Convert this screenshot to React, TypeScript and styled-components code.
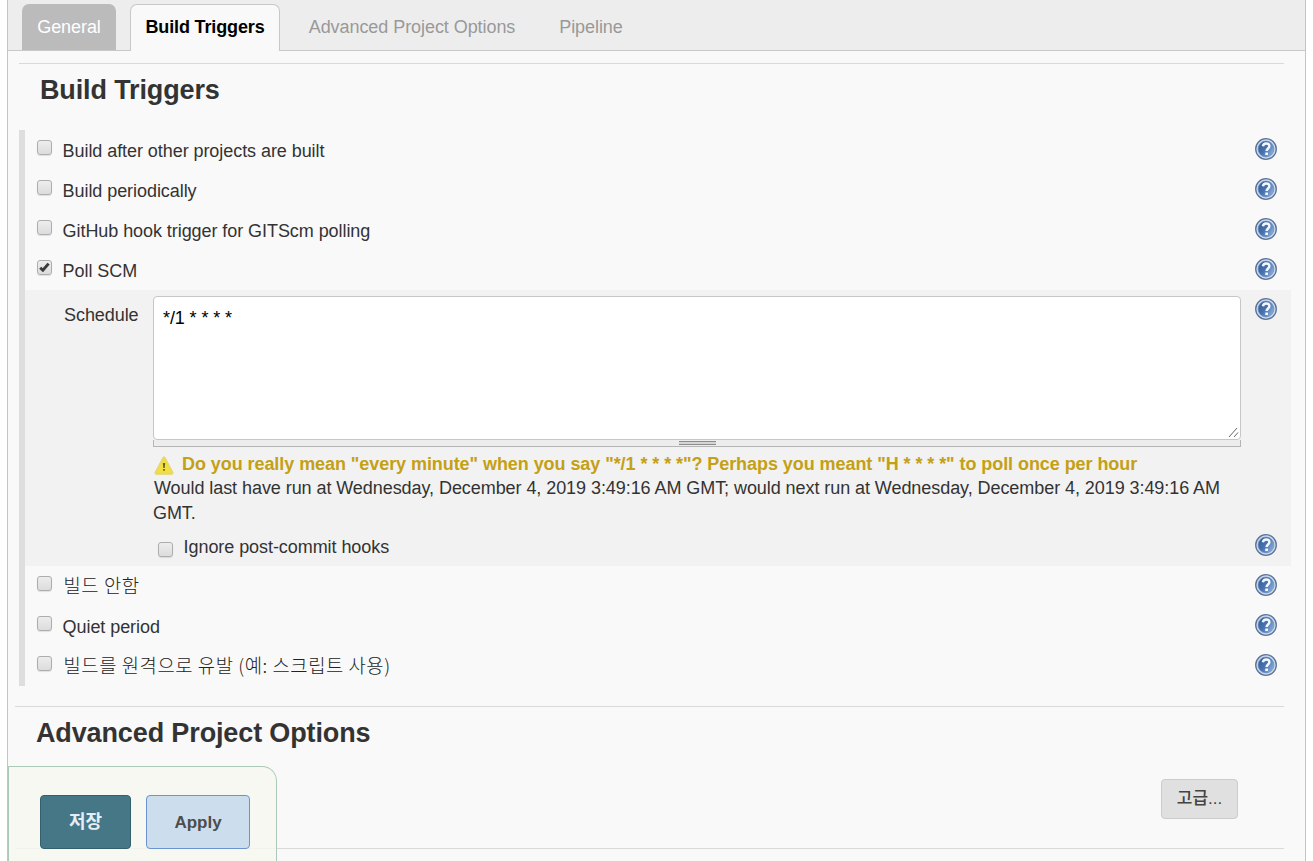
import React from "react";
import styled, { createGlobalStyle } from "styled-components";

const GlobalStyle = createGlobalStyle`
  * { box-sizing: border-box; }
  body {
    margin: 0;
    background: #fff;
    color: #333;
    font-family: "Liberation Sans", "Noto Sans CJK KR", sans-serif;
    font-size: 18px;
    letter-spacing: -0.065px;
    overflow: hidden;
  }
`;

const Page = styled.div`
  height: 861px;
  padding: 0 7px;
  overflow: hidden;
`;

const Panel = styled.main`
  display: flex;
  flex-direction: column;
  width: 1299px;
  height: 861px;
  background: #f9f9f9;
  border: solid #c4c4c4;
  border-width: 0 1px;
`;

const TabBar = styled.nav`
  display: flex;
  align-items: flex-end;
  height: 51px;
  padding-left: 14px;
  background: #ededed;
  border-bottom: 1px solid #c8c8c8;
`;

const Tab = styled.a<{ $kind?: "visited" | "active"; $width: number; $gap?: number }>`
  display: flex;
  justify-content: center;
  flex: none;
  width: ${(p) => p.$width}px;
  height: 46px;
  margin-left: ${(p) => p.$gap ?? 0}px;
  padding-top: 13px;
  line-height: 20px;
  border-radius: 7px 7px 0 0;
  color: #999;
  white-space: nowrap;
  ${(p) => p.$kind === "visited" && "background: #bbb; color: #fff;"}
  ${(p) =>
    p.$kind === "active" &&
    `background: #f9f9f9; color: #000; font-weight: bold; height: 47px; letter-spacing: -0.14px;
     border: 1px solid #c8c8c8; border-bottom: 0; margin-bottom: -1px; padding-top: 12px;`}
`;

const Section = styled.section<{ $indent: number; $top?: number }>`
  margin: ${(p) => p.$top ?? 0}px 21px 0 ${(p) => p.$indent}px;
  border-top: 1px solid #d9d9d9;
`;

const Heading = styled.h2`
  margin: 0;
  padding: 10px 0 0 21px;
  height: 66px;
  font-size: 27px;
  line-height: 32px;
  letter-spacing: -0.13px;
  white-space: nowrap;
`;

const TriggerList = styled.div`
  width: 1272px;
  border-left: 6px solid #dedede;
`;

const TriggerRow = styled.label`
  display: flex;
  height: 40px;
  padding: 0 14px 0 12px;
`;

const CheckFace = styled.span`
  flex: none;
  display: flex;
  width: 15px;
  height: 15px;
  margin-top: 10px;
  border: 1px solid #adadad;
  border-radius: 3px;
  background: linear-gradient(#ededed, #dcdcdc);
  box-shadow: 0 1px 1px rgba(0, 0, 0, 0.1);
`;

const RowText = styled.span<{ $korean?: boolean }>`
  flex: 1;
  margin-left: ${(p) => (p.$korean ? 11.5 : 10.6)}px;
  padding-top: ${(p) => (p.$korean ? 9 : 11)}px;
  line-height: 20px;
  white-space: nowrap;
  ${(p) =>
    p.$korean &&
    `font-family: "Noto Sans CJK KR", sans-serif; font-weight: 300; color: #222;
     font-size: 18.8px; letter-spacing: 0.56px;`}
`;

const HelpButton = styled.span<{ $top?: number }>`
  flex: none;
  width: 22px;
  height: 22px;
  margin-top: ${(p) => p.$top ?? 8}px;
  svg { display: block; }
`;

const Nested = styled.div`
  height: 276px;
  background: #f2f2f2;
`;

const ScheduleRow = styled.div`
  display: flex;
  height: 239px;
  padding: 6px 14px 0 39px;
`;

const FieldLabel = styled.span`
  width: 89px;
  padding-top: 9px;
  line-height: 20px;
`;

const Field = styled.div`
  width: 1088px;
  margin-right: 14px;
`;

const EditorFrame = styled.div`
  position: relative;
  height: 144px;
`;

const Editor = styled.textarea`
  display: block;
  width: 1088px;
  height: 144px;
  padding: 11px 9px;
  border: 1px solid #c6c6c6;
  border-radius: 4px;
  background: #fff;
  color: #000;
  font: 18px/21px "Liberation Sans", sans-serif;
  letter-spacing: -0.1px;
  resize: none;
  outline: 0;
`;

const CornerHandle = styled.svg`
  position: absolute;
  right: 1px;
  bottom: 2px;
`;

const ResizeBar = styled.div`
  display: flex;
  justify-content: center;
  height: 7px;
  border: 1px solid #b5b5b5;
  border-top: 0;
  background: #ededed;
`;

const Grip = styled.span`
  width: 37px;
  height: 4px;
  margin-top: 1px;
  border: solid #8c8c8c;
  border-width: 1px 0;
  background: #d6d6d6;
`;

const Warning = styled.div`
  display: flex;
  height: 28px;
  padding-top: 7px;
  color: #c4a015;
  font-weight: bold;
  line-height: 20px;
  white-space: nowrap;
  svg { flex: none; margin: 2px 8px 0 1px; }
`;

const RunInfo = styled.div`
  padding-top: 1px;
  line-height: 25px;
  text-indent: 1px;
`;

const OptionRow = styled.label`
  display: flex;
  height: 37px;
  padding: 0 14px 0 133px;
`;

const OptionCheck = styled(CheckFace)`
  margin-top: 13px;
`;

const OptionText = styled.span`
  flex: 1;
  margin-left: 10.6px;
  padding-top: 8px;
  line-height: 20px;
`;

const AdvancedRow = styled.div`
  display: flex;
  justify-content: flex-end;
  height: 75px;
  padding: 6px 46px 0 0;
`;

const Button = styled.button<{ $tone: "save" | "apply" | "plain" }>`
  display: flex;
  justify-content: center;
  align-items: center;
  padding: 0;
  border-radius: 4px;
  font-family: "Liberation Sans", "Noto Sans CJK KR", sans-serif;
  font-size: 17px;
  font-weight: bold;
  ${(p) => p.$tone === "save" && "width: 91px; height: 54px; padding-bottom: 4px; background: #457787; border: 1px solid #345f6c; color: #e4eff5; font-size: 18px;"}
  ${(p) => p.$tone === "apply" && "width: 104px; height: 54px; padding-top: 2px; background: #ccdded; border: 1px solid #6a93cf; color: #4d4d4d;"}
  ${(p) => p.$tone === "plain" && "width: 77px; height: 40px; padding-bottom: 6px; background: #e0e0e0; border: 1px solid #ccc; color: #444; font-weight: 500;"}
`;

const SaveBar = styled.footer`
  position: fixed;
  left: 8px;
  bottom: 0;
  display: flex;
  gap: 15px;
  width: 269px;
  height: 95px;
  padding: 28px 0 0 31px;
  border: 1px solid #acc9b8;
  border-width: 1px 1px 0 1px;
  border-radius: 0 15px 0 0;
  background: rgba(246, 248, 240, 0.8);
`;

function HelpIcon({ top }: { top?: number }) {
  return (
    <HelpButton $top={top}>
      <svg width="22" height="22" viewBox="0 0 22 22">
        <defs>
          <linearGradient id="helpFace" x1="0" y1="0.2" x2="1" y2="0.8">
            <stop offset="0" stopColor="#36609f" />
            <stop offset="0.45" stopColor="#4772ae" />
            <stop offset="1" stopColor="#8fb3dc" />
          </linearGradient>
        </defs>
        <circle cx="11" cy="11" r="10.3" fill="#c9d8ec" stroke="#5b7196" strokeWidth="1.3" />
        <circle cx="11" cy="11" r="7.9" fill="url(#helpFace)" stroke="#5f86bb" strokeWidth="0.6" />
        <path d="M7.9 8.3C8.2 6.3 9.5 5.5 11.2 5.5c1.9 0 3.2 1 3.2 2.6 0 2.4-2.8 2.4-2.8 4.9" fill="none" stroke="#f4f8fd" strokeWidth="2.4" />
        <rect x="10.2" y="14.4" width="2.8" height="2.6" rx="0.5" fill="#f4f8fd" />
      </svg>
    </HelpButton>
  );
}

function WarningIcon() {
  return (
    <svg width="20" height="19" viewBox="0 0 20 19">
      <path d="M9 1.3q1-1 2 0L19 16.4q.5 1.6-1 1.9H2Q.6 18 1 16.4Z" fill="#ecdc4c" stroke="#e3d67a" />
      <path d="M10 3.5 17 16.5H3Z" fill="#f1e03e" />
      <path d="M8.8 7h2.4l-.5 5H9.3ZM9.1 13h1.8v1.8H9.1Z" fill="#6a6128" />
    </svg>
  );
}

function Trigger({ text, checked, korean }: { text: string; checked?: boolean; korean?: boolean }) {
  return (
    <TriggerRow>
      <CheckFace>
        {checked && (
          <svg width="13" height="13" viewBox="0 0 13 13">
            <path d="M2.2 6.7 4.9 9.2 10.6 2.6" fill="none" stroke="#3b3b3b" strokeWidth="2.9" />
          </svg>
        )}
      </CheckFace>
      <RowText $korean={korean}>{text}</RowText>
      <HelpIcon />
    </TriggerRow>
  );
}

export default function App() {
  return (
    <Page>
      <GlobalStyle />
      <Panel>
        <TabBar>
          <Tab $kind="visited" $width={94}>General</Tab>
          <Tab $kind="active" $width={150} $gap={14}>Build Triggers</Tab>
          <Tab $width={236} $gap={14}>Advanced Project Options</Tab>
          <Tab $width={94} $gap={14}>Pipeline</Tab>
        </TabBar>
        <Section $indent={11} $top={12}>
          <Heading>Build Triggers</Heading>
          <TriggerList>
            <Trigger text="Build after other projects are built" />
            <Trigger text="Build periodically" />
            <Trigger text="GitHub hook trigger for GITScm polling" />
            <Trigger text="Poll SCM" checked />
            <Nested>
              <ScheduleRow>
                <FieldLabel>Schedule</FieldLabel>
                <Field>
                  <EditorFrame>
                    <Editor defaultValue="*/1 * * * *" spellCheck={false} />
                    <CornerHandle width="12" height="12" viewBox="0 0 12 12">
                      <path d="M1 11 9 2M6 11l4-4.5" fill="none" stroke="#666" />
                    </CornerHandle>
                  </EditorFrame>
                  <ResizeBar><Grip /></ResizeBar>
                  <Warning>
                    <WarningIcon />
                    Do you really mean "every minute" when you say "*/1 * * * *"? Perhaps you meant "H * * * *" to poll once per hour
                  </Warning>
                  <RunInfo>
                    Would last have run at Wednesday, December 4, 2019 3:49:16 AM GMT; would next run at Wednesday, December 4, 2019 3:49:16 AM GMT.
                  </RunInfo>
                </Field>
                <HelpIcon top={2} />
              </ScheduleRow>
              <OptionRow>
                <OptionCheck />
                <OptionText>Ignore post-commit hooks</OptionText>
                <HelpIcon top={5} />
              </OptionRow>
            </Nested>
            <Trigger text="빌드 안함" korean />
            <Trigger text="Quiet period" />
            <Trigger text="빌드를 원격으로 유발 (예: 스크립트 사용)" korean />
          </TriggerList>
        </Section>
        <Section $indent={7} $top={20}>
          <Heading>Advanced Project Options</Heading>
          <AdvancedRow>
            <Button $tone="plain">고급...</Button>
          </AdvancedRow>
        </Section>
        <Section $indent={7} />
      </Panel>
      <SaveBar>
        <Button $tone="save">저장</Button>
        <Button $tone="apply">Apply</Button>
      </SaveBar>
    </Page>
  );
}
